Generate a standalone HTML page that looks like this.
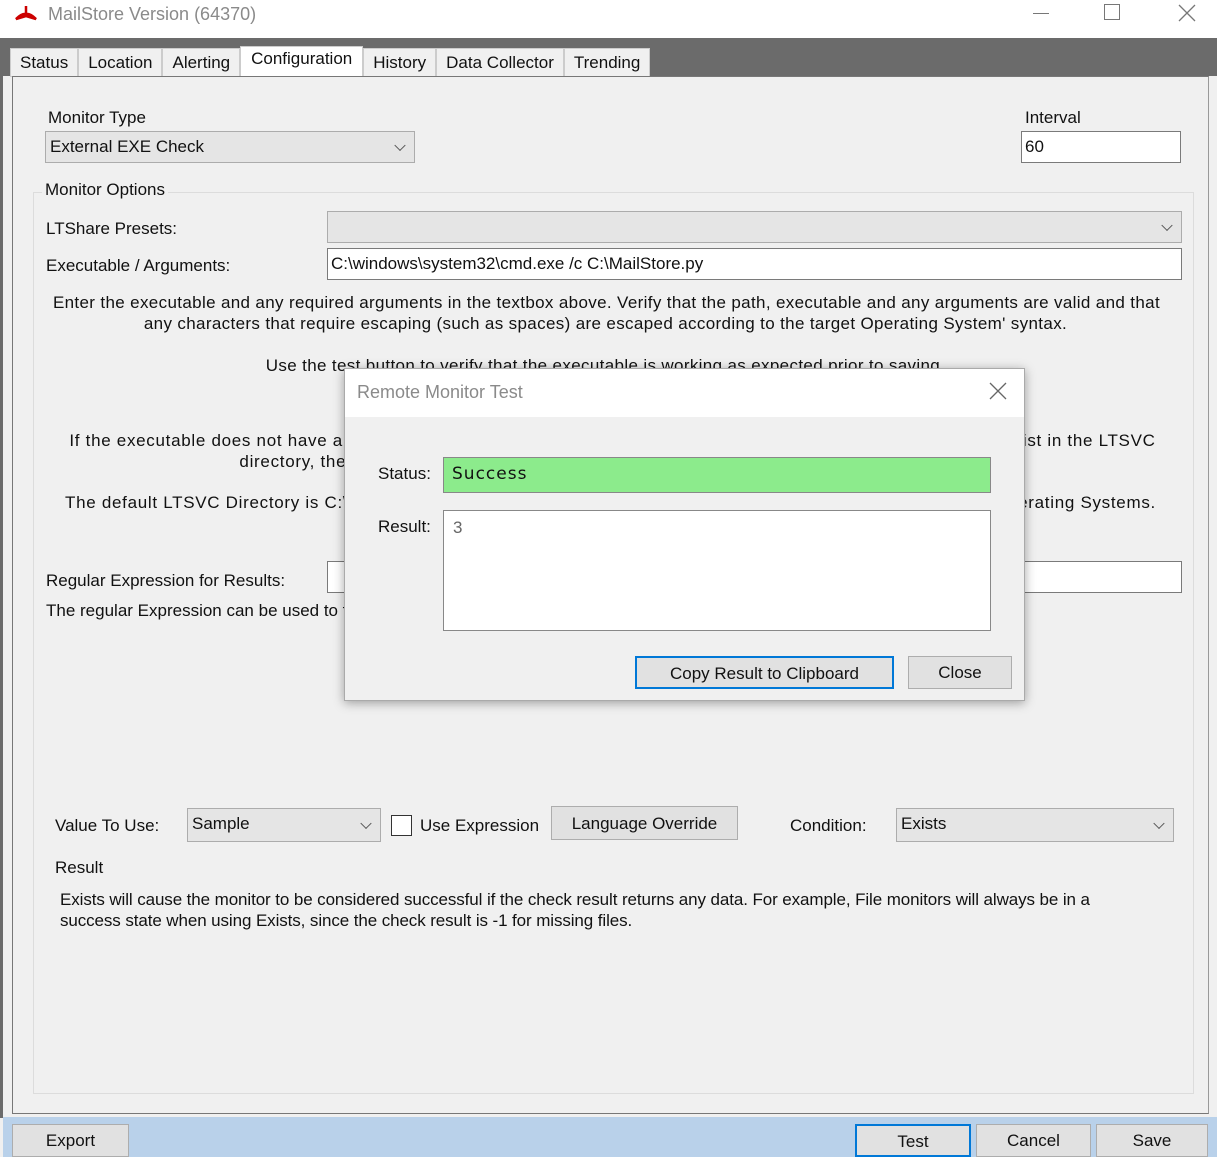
<!DOCTYPE html>
<html><head><meta charset="utf-8"><style>
*{box-sizing:border-box;margin:0;padding:0}
body{width:1217px;height:1157px;position:relative;overflow:hidden;background:#f0f0f0;font-family:"Liberation Sans",sans-serif;font-size:17px;color:#111}
.a{position:absolute;white-space:nowrap}
.combo{position:absolute;background:#e5e5e5;border:1px solid #acacac;padding:5px 4px}
.combo:after{content:"";position:absolute;right:10px;top:50%;width:7px;height:7px;border-right:1.5px solid #555;border-bottom:1.5px solid #555;transform:translateY(-70%) rotate(45deg)}
.inp{position:absolute;background:#fff;border:1px solid #7a7a7a;padding:5px 3px}
.btn{position:absolute;background:#e1e1e1;border:1px solid #adadad;text-align:center}
.ctr{position:absolute;left:0;width:1217px;text-align:center;white-space:nowrap;letter-spacing:0.35px}
.tabs div{background:#f0f0f0;border:1px solid #ccc;padding:4px 9px;height:29px}
</style></head><body>
<div class="a" style="left:0;top:0;width:1217px;height:38px;background:#fff"></div>
<svg class="a" style="left:14px;top:4px" width="24" height="18"><path d="M12 2 L12 10 M2 15 Q8 9 12 10 Q16 9 22 15 L12 12 Z" stroke="#c00" stroke-width="2.5" fill="#c00"/></svg>
<div class="a" style="left:48px;top:4px;color:#8a8a8a;font-size:18px">MailStore Version (64370)</div>
<div class="a" style="left:1033px;top:13px;width:16px;height:1px;background:#777"></div>
<div class="a" style="left:1104px;top:4px;width:16px;height:16px;border:1px solid #777"></div>
<svg class="a" style="left:1177px;top:3px" width="20" height="20"><path d="M2 2L18 18M18 2L2 18" stroke="#777" stroke-width="1.3"/></svg>
<div class="a" style="left:0;top:38px;width:1217px;height:38px;background:#6b6b6b"></div>
<div class="a" style="left:0;top:38px;width:3px;height:1080px;background:#6b6b6b"></div>
<div class="a tabs" style="left:10px;top:48px;height:29px;display:flex">
<div>Status</div>
<div>Location</div>
<div>Alerting</div>
<div style="background:#fff;padding:2px 10px;height:31px;margin-top:-2px">Configuration</div>
<div>History</div>
<div>Data Collector</div>
<div>Trending</div>
</div>
<div class="a" style="left:12px;top:76px;width:1197px;height:1038px;border:1px solid #777;border-right-color:#999;background:#f0f0f0"></div>
<div class="a" style="left:48px;top:108px">Monitor Type</div>
<div class="combo" style="left:45px;top:131px;width:370px;height:32px">External EXE Check</div>
<div class="a" style="left:1025px;top:108px">Interval</div>
<div class="inp" style="left:1021px;top:131px;width:160px;height:32px">60</div>
<div class="a" style="left:33px;top:192px;width:1161px;height:902px;border:1px solid #dcdcdc"></div>
<div class="a" style="left:42px;top:180px;background:#f0f0f0;padding:0 3px">Monitor Options</div>
<div class="a" style="left:46px;top:219px">LTShare Presets:</div>
<div class="combo" style="left:327px;top:211px;width:855px;height:32px"></div>
<div class="a" style="left:46px;top:256px">Executable / Arguments:</div>
<div class="inp" style="left:327px;top:248px;width:855px;height:32px">C:\windows\system32\cmd.exe /c C:\MailStore.py</div>
<div class="ctr" style="top:293px;left:-2px">Enter the executable and any required arguments in the textbox above. Verify that the path, executable and any arguments are valid and that</div>
<div class="ctr" style="top:314px;left:-3px">any characters that require escaping (such as spaces) are escaped according to the target Operating System' syntax.</div>
<div class="ctr" style="top:356px;left:-3px">Use the test button to verify that the executable is working as expected prior to saving.</div>
<div class="ctr" style="top:431px;left:4px;letter-spacing:0.7px">If the executable does not have a full path specified, the Remote Agent will assume the executable is expected to exist in the LTSVC</div>
<div class="ctr" style="top:452px;left:4px;letter-spacing:0.7px">directory, the Remote Agent will fail if the executable does not exist in the LTSVC directory.</div>
<div class="ctr" style="top:493px;left:2px;letter-spacing:0.7px">The default LTSVC Directory is C:\Windows\LTSvc on 32 bit Operating Systems and C:\Windows\LTSvc on 64 bit Operating Systems.</div>
<div class="a" style="left:46px;top:571px">Regular Expression for Results:</div>
<div class="inp" style="left:327px;top:561px;width:855px;height:32px"></div>
<div class="a" style="left:46px;top:601px">The regular Expression can be used to filter the results returned. If left blank, the full result of the program is returned.</div>
<div class="a" style="left:55px;top:816px">Value To Use:</div>
<div class="combo" style="left:187px;top:808px;width:194px;height:34px">Sample</div>
<div class="a" style="left:391px;top:815px;width:21px;height:21px;border:1px solid #333;background:#fff"></div>
<div class="a" style="left:420px;top:816px">Use Expression</div>
<div class="btn" style="left:551px;top:806px;width:187px;height:34px;padding-top:7px">Language Override</div>
<div class="a" style="left:790px;top:816px">Condition:</div>
<div class="combo" style="left:896px;top:808px;width:278px;height:34px">Exists</div>
<div class="a" style="left:55px;top:858px">Result</div>
<div class="a" style="left:60px;top:890px;letter-spacing:-0.1px">Exists will cause the monitor to be considered successful if the check result returns any data. For example, File monitors will always be in a</div>
<div class="a" style="left:60px;top:911px;letter-spacing:-0.1px">success state when using Exists, since the check result is -1 for missing files.</div>
<div class="a" style="left:3px;top:1117px;width:1214px;height:40px;background:#b9d1ea"></div>
<div class="btn" style="left:12px;top:1124px;width:117px;height:33px;padding-top:6px">Export</div>
<div class="btn" style="left:855px;top:1124px;width:116px;height:33px;padding-top:6px;border:2px solid #0078d7">Test</div>
<div class="btn" style="left:976px;top:1124px;width:115px;height:33px;padding-top:6px">Cancel</div>
<div class="btn" style="left:1096px;top:1124px;width:112px;height:33px;padding-top:6px">Save</div>
<div class="a" style="left:344px;top:368px;width:681px;height:333px;background:#f0f0f0;border:1px solid #aaa;box-shadow:0 2px 10px rgba(0,0,0,0.35)"></div>
<div class="a" style="left:345px;top:369px;width:679px;height:48px;background:#fff"></div>
<div class="a" style="left:357px;top:382px;color:#8a8a8a;font-size:18px">Remote Monitor Test</div>
<svg class="a" style="left:989px;top:382px" width="18" height="18"><path d="M1 1L17 17M17 1L1 17" stroke="#666" stroke-width="1.3"/></svg>
<div class="a" style="left:378px;top:464px">Status:</div>
<div class="a" style="left:443px;top:457px;width:548px;height:36px;background:#8ceb8c;border:1px solid #888;padding:6px 8px;font-family:'DejaVu Sans',sans-serif;font-size:17px;letter-spacing:1px">Success</div>
<div class="a" style="left:378px;top:517px">Result:</div>
<div class="a" style="left:443px;top:510px;width:548px;height:121px;background:#fff;border:1px solid #888;padding:7px 9px;color:#666">3</div>
<div class="btn" style="left:635px;top:656px;width:259px;height:33px;padding-top:6px;border:2px solid #0078d7">Copy Result to Clipboard</div>
<div class="btn" style="left:908px;top:656px;width:104px;height:33px;padding-top:6px">Close</div>
</body></html>
